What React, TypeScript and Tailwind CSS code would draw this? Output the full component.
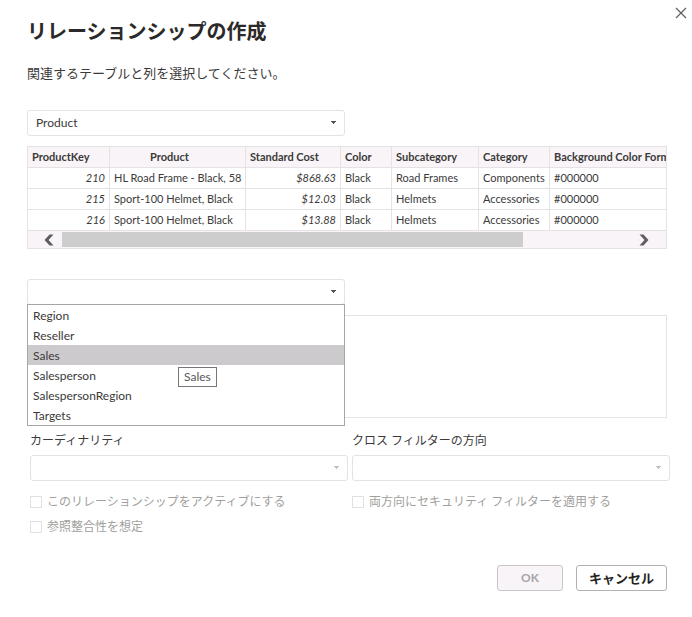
import { useState } from "react";

type Product = {
  key: number;
  name: string;
  cost: string;
  color: string;
  subcategory: string;
  category: string;
  background: string;
};

const products: Product[] = [
  { key: 210, name: "HL Road Frame - Black, 58", cost: "$868.63", color: "Black", subcategory: "Road Frames", category: "Components", background: "#000000" },
  { key: 215, name: "Sport-100 Helmet, Black", cost: "$12.03", color: "Black", subcategory: "Helmets", category: "Accessories", background: "#000000" },
  { key: 216, name: "Sport-100 Helmet, Black", cost: "$13.88", color: "Black", subcategory: "Helmets", category: "Accessories", background: "#000000" },
];

const tables = ["Region", "Reseller", "Sales", "Salesperson", "SalespersonRegion", "Targets"];

const headings = [
  { label: "ProductKey", width: "w-[82px]", align: "text-left" },
  { label: "Product", width: "w-[136px]", align: "text-center pr-5" },
  { label: "Standard Cost", width: "w-[95px]", align: "text-left" },
  { label: "Color", width: "w-[51px]", align: "text-left" },
  { label: "Subcategory", width: "w-[87px]", align: "text-left" },
  { label: "Category", width: "w-[71px]", align: "text-left" },
  { label: "Background Color Format", width: "", align: "text-left" },
];

const cell = "h-[21px] border-r border-b border-[#e6e2e4] px-1 whitespace-nowrap overflow-hidden";

function SelectBox({ id, label, options = [], disabled = false }: { id: string; label?: string; options?: string[]; disabled?: boolean }) {
  return (
    <div className="relative">
      <select
        id={id}
        aria-label={label}
        disabled={disabled}
        className="block h-[26px] w-full appearance-none rounded-[3px] border border-[#e6e2e4] bg-white px-2 text-xs text-[#3b3a39] outline-none"
      >
        {options.map((o) => (
          <option key={o}>{o}</option>
        ))}
      </select>
      <svg
        viewBox="0 0 5 3"
        className={"pointer-events-none absolute top-[11px] right-[9px] h-[3px] w-[5px] " + (disabled ? "text-[#c2c2c2]" : "text-[#555555]")}
        fill="currentColor"
        shapeRendering="crispEdges"
        aria-hidden="true"
      >
        <path d="M0 0h5v1H4v1H3v1H2V2H1V1H0z" />
      </svg>
    </div>
  );
}

function Check({ id, label }: { id: string; label: string }) {
  return (
    <div className="flex h-[25px] items-center gap-[5px]">
      <input id={id} type="checkbox" disabled className="size-3 appearance-none border border-[#e3dfe1] bg-white" />
      <label htmlFor={id} className="text-xs leading-4 text-[#a19f9d]">
        {label}
      </label>
    </div>
  );
}

function Arrow({ left = false }: { left?: boolean }) {
  return (
    <svg viewBox="0 0 10 12" className="h-3 w-[10px]" fill="#605e5c" aria-hidden="true">
      {left ? <path d="M5.5 0.5H9.5L4.5 6L9.5 11.5H5.5L0.5 6z" /> : <path d="M4.5 0.5H0.5L5.5 6L0.5 11.5H4.5L9.5 6z" />}
    </svg>
  );
}

export default function App() {
  const [active, setActive] = useState("Sales");
  return (
    <main className="min-h-screen bg-white pb-6 font-['Lato','Noto_Sans_CJK_JP',sans-serif] text-xs text-[#3b3a39]">
      <header className="flex items-start justify-between pr-[5px] pl-[27px]">
        <h1 className="pt-[15px] text-xl leading-8 font-bold text-[#2b2a29]">リレーションシップの作成</h1>
        <button type="button" aria-label="閉じる" className="mt-[7px]">
          <svg viewBox="0 0 12 12" className="size-3" stroke="#605e5c" strokeWidth="1.2" aria-hidden="true">
            <path d="M1 1L11 11M11 1L1 11" />
          </svg>
        </button>
      </header>

      <section className="pr-[25px] pl-[27px]">
        <p className="mt-4 text-[13px] leading-5">関連するテーブルと列を選択してください。</p>

        <div className="mt-[27px] w-[318px]">
          <SelectBox id="first-table" label="1 番目のテーブル" options={["Product"]} />
        </div>

        <div className="mt-[10px] overflow-hidden border-t border-l border-[#e6e2e4]">
          <table className="w-full table-fixed border-separate border-spacing-0 text-[11px] leading-4">
            <thead>
              <tr className="bg-[#f8f4f8]">
                {headings.map((h) => (
                  <th key={h.label} scope="col" className={cell + " font-bold " + h.width + " " + h.align}>
                    {h.label}
                  </th>
                ))}
              </tr>
            </thead>
            <tbody>
              {products.map((p) => (
                <tr key={p.key}>
                  <td className={cell + " text-right italic"}>{p.key}</td>
                  <td className={cell}>{p.name}</td>
                  <td className={cell + " text-right italic"}>{p.cost}</td>
                  <td className={cell}>{p.color}</td>
                  <td className={cell}>{p.subcategory}</td>
                  <td className={cell}>{p.category}</td>
                  <td className={cell}>{p.background}</td>
                </tr>
              ))}
            </tbody>
          </table>
          <div className="flex h-[18px] items-center border-r border-b border-[#e6e2e4] bg-[#f8f4f8]">
            <button type="button" aria-label="左へスクロール" className="flex w-[34px] justify-end pr-2">
              <Arrow left />
            </button>
            <div className="h-[15px] flex-1">
              <div className="h-full w-4/5 bg-[#cdcdcd]" />
            </div>
            <button type="button" aria-label="右へスクロール" className="flex w-7 pl-[1px]">
              <Arrow />
            </button>
          </div>
        </div>

        <div className="relative mt-[30px]">
          <div className="w-[318px]">
            <SelectBox id="second-table" label="2 番目のテーブル" />
          </div>
          <div className="mt-[10px] h-[103px] border border-[#e6e2e4]" />
          <ul role="listbox" aria-label="テーブル" className="absolute top-[25px] left-0 w-[318px] border border-[#a6a6a6] bg-white">
            {tables.map((t) => (
              <li
                key={t}
                role="option"
                aria-selected={t === active}
                onMouseEnter={() => setActive(t)}
                className={"h-5 px-[5px] leading-[22px] " + (t === active ? "bg-[#cdcacd]" : "")}
              >
                {t}
              </li>
            ))}
          </ul>
          <div role="tooltip" className="absolute top-[88px] left-[151px] border border-[#767676] bg-white px-[5px] leading-[18px] text-[#575757]">
            {active}
          </div>
        </div>
      </section>

      <section className="mt-[13px] grid grid-cols-2 gap-1 pr-[22px] pl-[30px]">
        <div>
          <label htmlFor="cardinality" className="mb-1 block leading-5">
            カーディナリティ
          </label>
          <SelectBox id="cardinality" disabled />
          <div className="mt-2">
            <Check id="make-active" label="このリレーションシップをアクティブにする" />
            <Check id="integrity" label="参照整合性を想定" />
          </div>
        </div>
        <div>
          <label htmlFor="direction" className="mb-1 block leading-5">
            クロス フィルターの方向
          </label>
          <SelectBox id="direction" disabled />
          <div className="mt-2">
            <Check id="security" label="両方向にセキュリティ フィルターを適用する" />
          </div>
        </div>
      </section>

      <footer className="mt-[26px] flex justify-end gap-[13px] pr-[25px]">
        <button type="button" disabled className="h-[26px] w-[66px] rounded-[3px] border border-[#c8c6c8] bg-[#f8f4f8] text-xs font-bold text-[#a6a4a6]">
          OK
        </button>
        <button type="button" className="h-[26px] w-[91px] rounded-[3px] border border-[#b3b0b3] bg-white text-[13px] leading-5 font-bold text-[#252423]">
          キャンセル
        </button>
      </footer>
    </main>
  );
}
